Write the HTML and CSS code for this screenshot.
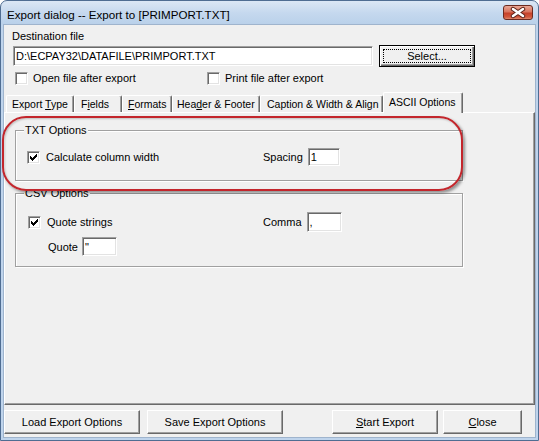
FILE: index.html
```html
<!DOCTYPE html>
<html>
<head>
<meta charset="utf-8">
<title>Export dialog</title>
<link rel="stylesheet" href="styles.css">
</head>
<body>
<div class="window">
  <div class="titlebar">
    <span class="title">Export dialog -- Export to [PRIMPORT.TXT]</span>
    <span class="close-btn">
      <svg width="28" height="13" viewBox="0 0 28 13">
        <path d="M9 3 L19 10 M19 3 L9 10" stroke="#5a1f16" stroke-width="4.4" stroke-linecap="round"/>
        <path d="M9 3 L19 10 M19 3 L9 10" stroke="#ffffff" stroke-width="2.6" stroke-linecap="round"/>
      </svg>
    </span>
  </div>
  <div class="client">
    <div class="dest">
      <div class="label">Destination file</div>
      <div class="dest-row">
        <div class="edit dest-edit">D:\ECPAY32\DATAFILE\PRIMPORT.TXT</div>
        <div class="btn default select-btn"><span class="focus">Select...</span></div>
      </div>
    </div>
    <div class="opts-row">
      <div class="chk open-chk"><span class="box"></span><span>Open file after export</span></div>
      <div class="chk"><span class="box"></span><span>Print file after export</span></div>
    </div>
    <div class="tabs">
      <div class="tab t1">Export <u>T</u>ype</div>
      <div class="tab t2">F<u>i</u>elds</div>
      <div class="tab t3"><u>F</u>ormats</div>
      <div class="tab t4">Hea<u>d</u>er &amp; Footer</div>
      <div class="tab t5">Caption &amp; Width &amp; Align</div>
      <div class="tab t6 active">ASCII Options</div>
    </div>
    <div class="panel">
      <fieldset class="group txt-group">
        <legend>TXT Options</legend>
        <div class="grp-row txt-row">
          <div class="chk wide-chk txt-chk">
            <span class="box"><svg class="check" width="7" height="7" viewBox="0 0 7 7"><path d="M6 0h1v1h-1z M5 1h2v1h-2z M0 2h1v1h-1z M4 2h3v1h-3z M0 3h2v1h-2z M3 3h3v1h-3z M0 4h5v1h-5z M1 5h3v1h-3z M2 6h1v1h-1z" fill="#000"/></svg></span>
            <span>Calculate column width</span>
          </div>
          <span class="field-label">Spacing</span>
          <div class="edit spacing-edit">1</div>
        </div>
      </fieldset>
      <fieldset class="group csv-group">
        <legend>CSV Options</legend>
        <div class="grp-row csv-row1">
          <div class="chk wide-chk csv-chk">
            <span class="box"><svg class="check" width="7" height="7" viewBox="0 0 7 7"><path d="M6 0h1v1h-1z M5 1h2v1h-2z M0 2h1v1h-1z M4 2h3v1h-3z M0 3h2v1h-2z M3 3h3v1h-3z M0 4h5v1h-5z M1 5h3v1h-3z M2 6h1v1h-1z" fill="#000"/></svg></span>
            <span>Quote strings</span>
          </div>
          <span class="field-label">Comma</span>
          <div class="edit comma-edit">,</div>
        </div>
        <div class="grp-row csv-row2">
          <span class="field-label quote-label">Quote</span>
          <div class="edit quote-edit">"</div>
        </div>
      </fieldset>
      <div class="annot"></div>
    </div>
    <div class="buttons">
      <div class="btn b-load">Load Export Options</div>
      <div class="btn b-save">Save Export Options</div>
      <div class="btn b-start"><span><u>S</u>tart Export</span></div>
      <div class="btn b-close"><span><u>C</u>lose</span></div>
    </div>
  </div>
</div>
</body>
</html>
```
FILE: styles.css
```css
html, body {
  margin: 0;
  padding: 0;
}
body {
  width: 539px;
  height: 441px;
  overflow: hidden;
  background: #ffffff;
  font-family: "Liberation Sans", Arial, sans-serif;
  font-size: 11px;
  color: #000;
}
.window {
  box-sizing: border-box;
  width: 539px;
  height: 441px;
  border: 1px solid #4f6d92;
  border-radius: 7px 7px 0 0;
  background: linear-gradient(#dbe7f5 0, #c5d8ee 12px, #bad1ea 23px, #bfd4ec 24px);
  padding: 0 2px 2px;
  display: flex;
  flex-direction: column;
}
.titlebar {
  height: 23px;
  flex: none;
  display: flex;
  justify-content: space-between;
  align-items: flex-start;
  padding: 0 3px 0 4px;
}
.title {
  font-size: 11.6px;
  line-height: 14px;
  margin-top: 7px;
  color: #000;
  white-space: nowrap;
}
.close-btn {
  box-sizing: border-box;
  width: 30px;
  height: 15px;
  margin-top: 4px;
  border: 1px solid #6b2a20;
  border-radius: 3px;
  background: linear-gradient(#e9a796 0, #d9745e 45%, #c6412a 55%, #d2583d 85%, #e08a6e 100%);
  display: flex;
}
.close-btn svg {
  display: block;
}
.client {
  flex: 1;
  border: 1px solid #9fb4cd;
  background: #f0f0f0;
  position: relative;
}
.dest {
  padding: 5px 0 0 8px;
}
.label {
  line-height: 13px;
}
.dest-row {
  display: flex;
  align-items: center;
  height: 22px;
  margin-top: 2px;
}
.edit {
  box-sizing: border-box;
  background: #fff;
  border: 1px solid;
  border-color: #a0a0a0 #ffffff #ffffff #a0a0a0;
  box-shadow: inset 1px 1px 0 #696969, inset -1px -1px 0 #e3e3e3;
  padding-left: 2px;
  display: flex;
  align-items: center;
  white-space: nowrap;
}
.dest-edit {
  margin-left: 1px;
  width: 360px;
  height: 20px;
}
.btn {
  box-sizing: border-box;
  background: #f0f0f0;
  border: 1px solid;
  border-color: #ffffff #696969 #696969 #ffffff;
  box-shadow: inset -1px -1px 0 #a0a0a0;
  display: flex;
  align-items: center;
  justify-content: center;
  white-space: nowrap;
}
.btn.default {
  border: 1px solid #000;
  box-shadow: inset 1px 1px 0 #fff, inset -1px -1px 0 #696969, inset -2px -2px 0 #a0a0a0;
  padding: 3px;
  align-items: stretch;
}
.select-btn {
  margin-left: 6px;
  width: 96px;
  height: 22px;
}
.focus {
  flex: 1;
  border: 1px dotted #000;
  display: flex;
  align-items: center;
  justify-content: center;
}
.opts-row {
  display: flex;
  align-items: center;
  height: 13px;
  margin-top: 5px;
  padding-left: 11px;
}
.chk {
  display: flex;
  align-items: center;
  gap: 5px;
  line-height: 13px;
  white-space: nowrap;
}
.open-chk {
  width: 192px;
}
.box {
  box-sizing: border-box;
  width: 13px;
  height: 13px;
  flex: none;
  background: #fff;
  border: 1px solid;
  border-color: #a0a0a0 #ffffff #ffffff #a0a0a0;
  box-shadow: inset 1px 1px 0 #696969, inset -1px -1px 0 #e3e3e3;
  display: flex;
  align-items: center;
  justify-content: center;
}
.check {
  display: block;
  shape-rendering: crispEdges;
}
.tabs {
  display: flex;
  align-items: flex-end;
  height: 20px;
  margin-top: 7px;
  padding-left: 2px;
  font-size: 10.5px;
}
.tab {
  box-sizing: border-box;
  height: 17px;
  line-height: 16px;
  padding-left: 5px;
  border-top: 1px solid #fff;
  border-left: 1px solid #fff;
  border-right: 1px solid #696969;
  box-shadow: inset -1px 0 0 #a0a0a0;
  border-radius: 2px 2px 0 0;
  white-space: nowrap;
  overflow: hidden;
}
.t1 { width: 68px; }
.t2 { width: 48px; padding-left: 6px; }
.t3 { width: 50px; }
.t4 { width: 88px; padding-left: 4px; }
.t5 { width: 123px; padding-left: 6px; }
.t6 { width: 80px; }
.tab.active {
  height: 21px;
  line-height: 18px;
  margin-bottom: -1px;
  background: #f0f0f0;
  position: relative;
  z-index: 2;
}
.panel {
  position: relative;
  box-sizing: border-box;
  height: 293px;
  border-top: 1px solid #fff;
  border-left: 1px solid #fff;
  border-right: 1px solid #696969;
  border-bottom: 1px solid #696969;
  box-shadow: inset -1px -1px 0 #a0a0a0;
  padding-top: 11px;
}
.group {
  box-sizing: border-box;
  width: 448px;
  margin: 0 0 0 10px;
  padding: 0;
  border: 1px solid #a0a0a0;
  box-shadow: inset 1px 1px 0 #fff, 1px 1px 0 #fff;
  min-inline-size: 0;
}
.group legend {
  margin-left: 8px;
  padding: 0 1px;
  line-height: 13px;
  background: #f0f0f0;
}
.txt-group {
  padding: 11px 0 14px 0;
}
.csv-group {
  margin-top: 6px;
  padding: 12px 0 10px 0;
}
.grp-row {
  display: flex;
  align-items: center;
}
.wide-chk {
  gap: 6px;
}
.txt-row {
  height: 18px;
  margin-left: 11px;
}
.txt-chk {
  width: 236px;
}
.field-label {
  margin-right: 5px;
  white-space: nowrap;
}
.spacing-edit {
  width: 32px;
  height: 18px;
}
.csv-row1 {
  height: 20px;
  margin-left: 12px;
}
.csv-chk {
  width: 235px;
}
.comma-edit {
  width: 35px;
  height: 20px;
}
.csv-row2 {
  height: 19px;
  margin-top: 5px;
  padding-left: 32px;
}
.quote-label {
  margin-right: 4px;
}
.quote-edit {
  width: 35px;
  height: 19px;
}
.annot {
  position: absolute;
  left: -3px;
  top: 3px;
  width: 461px;
  height: 75px;
  box-sizing: border-box;
  border: 2px solid #c3262c;
  border-radius: 24px;
  box-shadow: 2px 2px 3px rgba(0, 0, 0, 0.4), inset 1px 1px 2px rgba(0, 0, 0, 0.2);
  pointer-events: none;
  z-index: 3;
}
.buttons {
  display: flex;
  height: 24px;
  margin-top: 5px;
}
.b-load { width: 136px; }
.b-save { width: 136px; margin-left: 7px; }
.b-start { width: 106px; margin-left: 49px; }
.b-close { width: 79px; margin-left: 5px; }
```
